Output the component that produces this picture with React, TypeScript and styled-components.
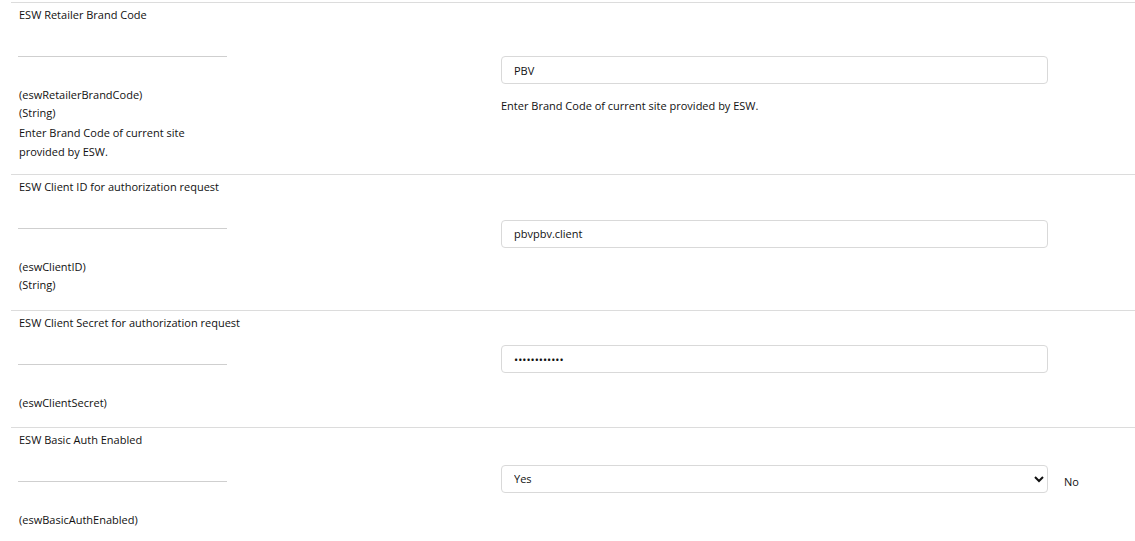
import React from "react";
import styled, { createGlobalStyle } from "styled-components";

const Global = createGlobalStyle`
  html, body { margin: 0; padding: 0; background: #fff; }
  body { font-family: "Open Sans", "Noto Sans", sans-serif; font-size: 11px; color: #111; }
  * { box-sizing: border-box; }
`;

const Table = styled.div`
  padding: 2px 0 0 11px;
  display: flex;
  flex-direction: column;
`;

const Row = styled.div`
  display: flex;
  align-items: center;
  border-top: 1px solid #dcdcdc;
`;

const LeftCell = styled.div`
  width: 482px;
  flex: none;
  padding: 3px 8px 0 8px;
  align-self: stretch;
  line-height: 18px;
`;

const Label = styled.div`
  height: 18px;
  white-space: nowrap;
`;

const Rule = styled.div`
  width: 209px;
  height: 1px;
  margin-left: -1px;
  background: #cfcfcf;
  margin-top: 32px;
  margin-bottom: 29px;
`;

const Meta = styled.div`
  white-space: nowrap;
`;

const Desc = styled.div<{ $pad: number }>`
  width: 190px;
  line-height: 19px;
  margin-top: 1px;
  padding-bottom: ${(p) => p.$pad}px;
`;

const Spacer = styled.div<{ $h: number }>`
  height: ${(p) => p.$h}px;
`;

const RightCell = styled.div`
  flex: 1;
  padding-left: 8px;
  display: flex;
  flex-direction: column;
`;

const Line = styled.div`
  display: flex;
  align-items: center;
`;

const TextInput = styled.input`
  width: 547px;
  height: 28px;
  border: 1px solid #d9d9d9;
  border-radius: 4px;
  padding: 0 12px;
  font-family: inherit;
  font-size: 11px;
  color: #111;
  margin-bottom: 13px;
  outline: none;
  background: #fff;
`;

const Select = styled.select`
  width: 547px;
  height: 28px;
  border: 1px solid #d9d9d9;
  border-radius: 4px;
  padding: 0 8px;
  font-family: inherit;
  font-size: 11px;
  color: #111;
  background: #fff;
  margin-bottom: 13px;
  outline: none;
`;

const Current = styled.span`
  margin-left: 16px;
  margin-bottom: 7px;
`;

const Help = styled.div`
  line-height: 18px;
  margin-bottom: 6px;
`;

export default function App() {
  return (
    <>
      <Global />
      <Table>
        <Row>
          <LeftCell>
            <Label>ESW Retailer Brand Code</Label>
            <Rule />
            <Meta>(eswRetailerBrandCode)</Meta>
            <Meta>(String)</Meta>
            <Desc $pad={13}>Enter Brand Code of current site provided by ESW.</Desc>
          </LeftCell>
          <RightCell>
            <TextInput defaultValue="PBV" />
            <Help>Enter Brand Code of current site provided by ESW.</Help>
          </RightCell>
        </Row>
        <Row>
          <LeftCell>
            <Label>ESW Client ID for authorization request</Label>
            <Rule />
            <Meta>(eswClientID)</Meta>
            <Meta>(String)</Meta>
            <Spacer $h={16} />
          </LeftCell>
          <RightCell>
            <TextInput defaultValue="pbvpbv.client" />
            <Spacer $h={5} />
          </RightCell>
        </Row>
        <Row>
          <LeftCell>
            <Label>ESW Client Secret for authorization request</Label>
            <Rule />
            <Meta>(eswClientSecret)</Meta>
            <Spacer $h={15} />
          </LeftCell>
          <RightCell>
            <TextInput type="password" defaultValue="pbvpbvsecret" />
            <Spacer $h={7} />
          </RightCell>
        </Row>
        <Row>
          <LeftCell>
            <Label>ESW Basic Auth Enabled</Label>
            <Rule />
            <Meta>(eswBasicAuthEnabled)</Meta>
            <Spacer $h={14} />
          </LeftCell>
          <RightCell>
            <Line>
              <Select defaultValue="yes">
                <option value="yes">Yes</option>
                <option value="no">No</option>
              </Select>
              <Current>No</Current>
            </Line>
            <Spacer $h={1} />
          </RightCell>
        </Row>
      </Table>
    </>
  );
}
